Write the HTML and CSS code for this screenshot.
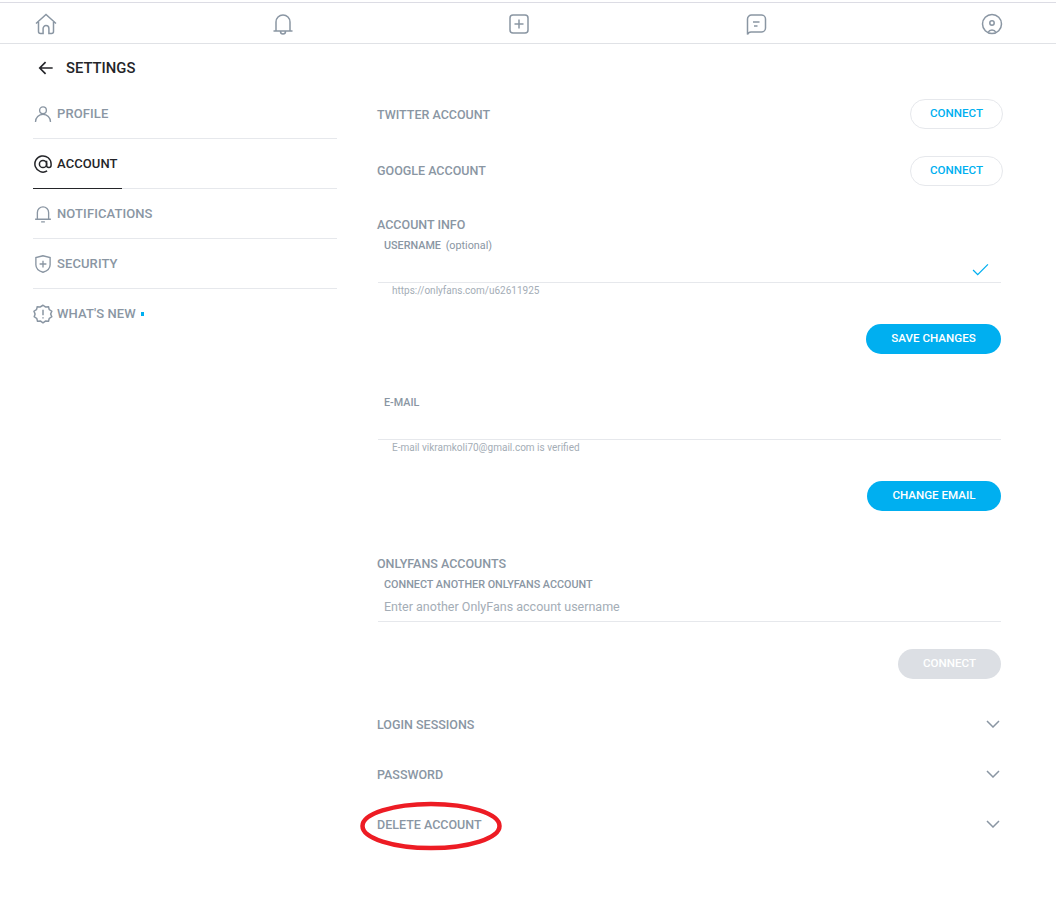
FILE: index.html
```html
<!DOCTYPE html>
<html lang="en">
<head>
  <meta charset="UTF-8">
  <meta name="viewport" content="width=device-width, initial-scale=1.0">
  <title>Settings</title>
  <link rel="stylesheet" href="styles.css">
</head>
<body>
  <!-- top icons -->
  <div class="top-nav">
    <svg class="nav-icon" viewBox="0 0 24 24"><path d="M2 11.500 12 2.500l10 9M4.500 10v9.500a2 2 0 0 0 2 2h2.600v-5a2.900 2.900 0 0 1 5.800 0v5h2.600a2 2 0 0 0 2-2V10"/></svg>
    <svg class="nav-icon" viewBox="0 0 24 24"><path d="M5 18.500V10a7 7 0 0 1 14 0v8.500M2.500 19h19M9.500 19.500a2.500 2.500 0 0 0 5 0"/></svg>
    <svg class="nav-icon" viewBox="0 0 24 24"><rect x="3" y="3" width="18" height="18" rx="3"/><path d="M12 7.500v9M7.500 12h9"/></svg>
    <svg class="nav-icon" viewBox="0 0 24 24"><path d="M3.500 22.500V7a4 4 0 0 1 4-4h10a4 4 0 0 1 4 4v9a4 4 0 0 1-4 4H7Q4.500 20 3.500 22.500ZM9 10h6.500M10 14h3.500"/></svg>
    <svg class="nav-icon" viewBox="0 0 24 24"><circle cx="12" cy="12" r="9.500"/><circle cx="12" cy="11" r="2.200"/><path d="M8 20.500a4.500 4.500 0 0 1 8 0"/></svg>
  </div>

  <div class="page">
    <div class="side">
      <div class="side-title">
        <svg class="back" viewBox="0 0 24 24"><path d="M20 12H5M11.500 5 4.500 12l7 7"/></svg>
        <span>SETTINGS</span>
      </div>
      <ul class="side-menu">
        <li>
          <svg class="side-icon" viewBox="0 0 24 24"><circle cx="12" cy="7" r="4.500"/><path d="M2 22.500a10 10 0 0 1 20 0"/></svg>
          PROFILE
        </li>
        <li class="active">
          <svg class="side-icon" viewBox="0 0 24 24"><circle cx="12" cy="12" r="4.800"/><path d="M16.800 7.500v6a3 3 0 0 0 6 0V12A10.800 10.800 0 1 0 17.500 21.300"/></svg>
          ACCOUNT
        </li>
        <li>
          <svg class="side-icon" viewBox="0 0 24 24"><path d="M4.500 18.500V10a7.500 7.500 0 0 1 15 0v8.500M1.500 19h21M9.500 22.500h5"/></svg>
          NOTIFICATIONS
        </li>
        <li>
          <svg class="side-icon" viewBox="0 0 24 24"><path d="M12 1 2.500 3.500V13c0 5 4.500 8.500 9.500 10 5-1.500 9.500-5 9.500-10V3.500ZM12 7.500v9M7.500 12h9"/></svg>
          SECURITY
        </li>
        <li>
          <svg class="side-icon wide" viewBox="0 0 24 24"><path d="M12 1.500l3 2 3.600-.2.900 3.400 3 2-1.300 3.300 1.300 3.300-3 2-.9 3.400-3.600-.2-3 2-3-2-3.600.2-.9-3.400-3-2L2.500 12 1.200 8.700l3-2 .9-3.400 3.600.2ZM12 7v6.500M12 16v1.500"/></svg>
          WHAT'S NEW <i class="dot"></i>
        </li>
      </ul>
    </div>

    <div class="content">
      <div class="row">
        <span class="title">TWITTER ACCOUNT</span>
        <button class="btn-line">CONNECT</button>
      </div>
      <div class="row row-google">
        <span class="title">GOOGLE ACCOUNT</span>
        <button class="btn-line">CONNECT</button>
      </div>

      <h4 class="title group-title">ACCOUNT INFO</h4>
      <div class="field">
        <label>USERNAME <span class="optional">(optional)</span></label>
        <svg class="check" viewBox="0 0 18 14"><path d="M1 7.500 6 12.500 17 1.500"/></svg>
      </div>
      <p class="hint">https://onlyfans.com/u62611925</p>
      <div class="actions"><button class="btn-blue save">SAVE CHANGES</button></div>

      <div class="field field-email">
        <label>E-MAIL</label>
      </div>
      <p class="hint">E-mail vikramkoli70@gmail.com is verified</p>
      <div class="actions"><button class="btn-blue change">CHANGE EMAIL</button></div>

      <h4 class="title group-title of-title">ONLYFANS ACCOUNTS</h4>
      <div class="field field-of">
        <label>CONNECT ANOTHER ONLYFANS ACCOUNT</label>
        <span class="placeholder">Enter another OnlyFans account username</span>
      </div>
      <div class="actions"><button class="btn-grey">CONNECT</button></div>

      <div class="fold first">
        <span class="title">LOGIN SESSIONS</span>
        <svg class="chev" viewBox="0 0 14 8"><path d="M1 1l6 6 6-6"/></svg>
      </div>
      <div class="fold">
        <span class="title">PASSWORD</span>
        <svg class="chev" viewBox="0 0 14 8"><path d="M1 1l6 6 6-6"/></svg>
      </div>
      <div class="fold">
        <span class="title">DELETE ACCOUNT</span>
        <svg class="chev" viewBox="0 0 14 8"><path d="M1 1l6 6 6-6"/></svg>
      </div>
    </div>
  </div>

  <!-- red circle drawn over the screenshot -->
  <svg class="mark" viewBox="0 0 142 50"><ellipse cx="71" cy="25" rx="68.500" ry="22"/></svg>
</body>
</html>
```

FILE: styles.css
```css
body{
  margin: 0;
  background: white;
  font-family: Roboto, "Liberation Sans", sans-serif;
  font-size: 13px;
  color: #8a96a3;
  position: relative;
  height: 906px;
  overflow: hidden;
}
.top-nav{
  margin-top: 2px;
  height: 40px;
  border-top: 1px solid #dcdce4;
  border-bottom: 1px solid #e0e2e6;
  display: flex;
  justify-content: space-between;
  align-items: center;
  padding: 0 52px 0 34px;
}
.nav-icon{
  width: 24px;
  height: 24px;
  margin-top: 1px;
  fill: none;
  stroke: #8a96a3;
  stroke-width: 1.500;
}
.page{
  display: flex;
  padding-left: 33px;
}
.side{
  width: 304px;
}
.side-title{
  height: 46px;
  margin-bottom: -1px;
  display: flex;
  align-items: center;
  gap: 10px;
  padding-left: 3px;
  font-size: 14.800px;
  font-weight: 500;
  color: #242529;
}
.side-title span{
  margin-top: 2px;
}
.back{
  width: 20px;
  height: 20px;
  fill: none;
  stroke: #242529;
  stroke-width: 2;
  margin-top: 2px;
}
.side-menu{
  list-style: none;
  margin: 0;
  padding: 0;
  letter-spacing: .1px;
}
.side-menu li{
  height: 49px;
  border-bottom: 1px solid #e6e8ec;
  display: flex;
  align-items: center;
  font-weight: 500;
  position: relative;
}
.side-menu li:last-child{
  border-bottom: none;
}
.side-menu .active{
  color: #242529;
}
.side-menu .active::after{
  content: "";
  position: absolute;
  left: 0;
  bottom: -1px;
  width: 89px;
  height: 1px;
  background: #242529;
}
.side-icon{
  width: 18px;
  height: 18px;
  margin: 0 5px 0 1px;
  fill: none;
  stroke: currentColor;
  stroke-width: 1.800;
  flex: none;
}
.active .side-icon{
  stroke-width: 2;
}
.side-icon.wide{
  width: 20px;
  height: 20px;
  margin: 0 4px 0 0;
}
.dot{
  width: 3px;
  height: 4px;
  background: #00aff0;
  margin-left: 5px;
}
.content{
  width: 626px;
  margin-left: 40px;
  padding-top: 55px;
}
.title{
  font-size: 12.500px;
  font-weight: 500;
  color: #8a96a3;
  margin: 0;
}
.row{
  display: flex;
  justify-content: space-between;
  align-items: center;
  height: 30px;
}
.row-google{
  margin-top: 27px;
}
.row-google .title{
  margin-bottom: 2px;
}
.btn-line{
  width: 93px;
  height: 30px;
  border: 1px solid #e6e8ec;
  border-radius: 15px;
  background: white;
  color: #00aff0;
  font: 500 11.600px Roboto, sans-serif;
  padding: 0 0 2px;
}
.btn-blue,
.btn-grey{
  height: 30px;
  border: none;
  border-radius: 15px;
  color: white;
  background: #00aff0;
  font: 500 11.600px Roboto, sans-serif;
  padding: 0 0 2px;
}
.btn-grey{
  width: 103px;
  background: #dcdfe4;
}
.save{
  width: 135px;
}
.change{
  width: 134px;
}
.group-title{
  padding-top: 31px;
  line-height: 16px;
}
.field{
  width: 623px;
  margin-left: 1px;
  height: 50px;
  border-bottom: 1px solid #e6e8ec;
  position: relative;
  box-sizing: border-box;
}
.field label{
  display: block;
  padding: 6px 0 0 6px;
  font-size: 10.800px;
  line-height: 14px;
  font-weight: 500;
}
.optional{
  font-weight: 400;
  margin-left: 2px;
}
.check{
  position: absolute;
  right: 12px;
  bottom: 6px;
  width: 17px;
  height: 13px;
  fill: none;
  stroke: #00aff0;
  stroke-width: 1.400;
}
.hint{
  margin: 2px 0 0 15px;
  font-size: 10px;
  line-height: 12px;
  color: #a4adb6;
}
.actions{
  display: flex;
  justify-content: flex-end;
  width: 624px;
  margin-top: 27px;
}
.field-email{
  margin-top: 37px;
  height: 49px;
}
.field-email label{
  padding-top: 5px;
}
.of-title{
  padding-top: 45px;
}
.placeholder{
  display: block;
  padding: 7px 0 0 6px;
  font-size: 12.500px;
  line-height: 16px;
  color: #a4adb6;
}
.fold{
  display: flex;
  justify-content: space-between;
  align-items: center;
  height: 50px;
  width: 623px;
}
.fold.first{
  margin-top: 20px;
}
.chev{
  width: 14px;
  height: 8px;
  fill: none;
  stroke: #8a96a3;
  stroke-width: 1.500;
}
.mark{
  position: absolute;
  left: 360px;
  top: 801px;
  width: 142px;
  height: 50px;
  fill: none;
  stroke: #ed1c24;
  stroke-width: 4.500;
}
```
